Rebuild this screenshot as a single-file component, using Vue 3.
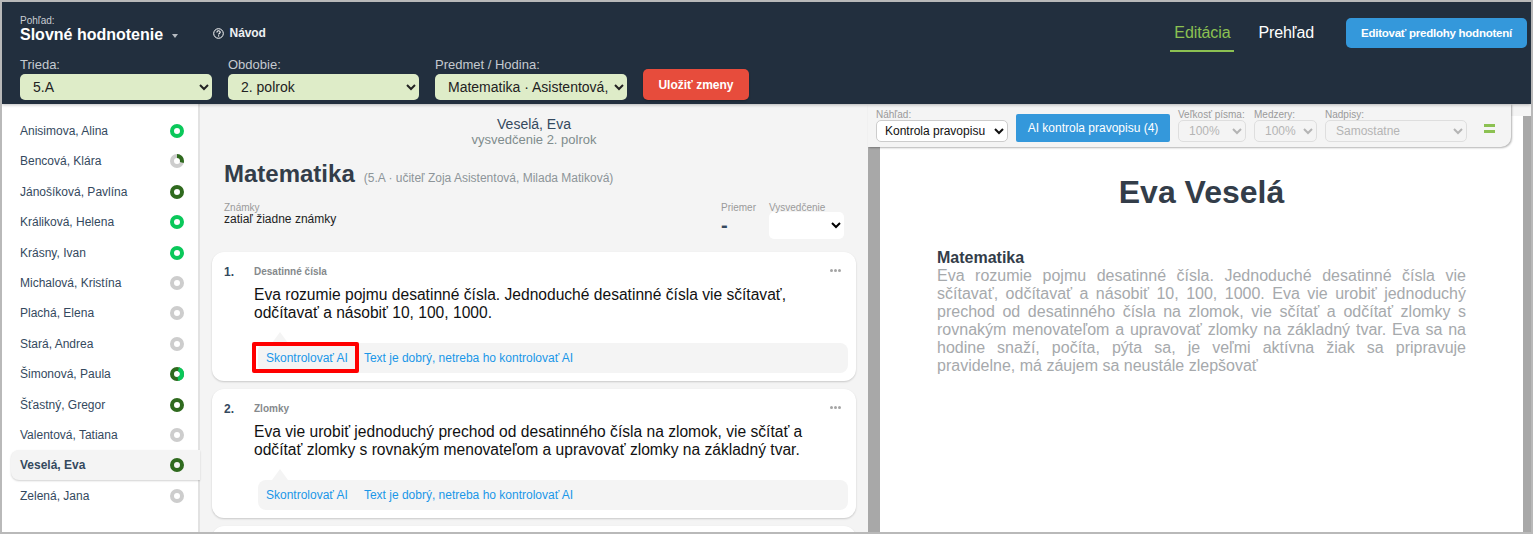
<template>
  <div class="frame">
    <header class="top">
      <div class="top-row">
        <div class="view">
          <div class="view-label">Pohľad:</div>
          <div class="view-title">Slovné hodnotenie <span class="caret"></span></div>
        </div>
        <a class="help">
          <svg width="11" height="11" viewBox="0 0 11 11">
            <circle cx="5.5" cy="5.5" r="4.8" fill="none" stroke="#fff" stroke-width="1" />
            <path d="M3.9 4.4c0-2.1 3.3-2.1 3.3-.1 0 1.2-1.6 1.2-1.6 2.3" fill="none" stroke="#fff" stroke-width="1.1" />
            <rect x="5" y="7.3" width="1.2" height="1.2" fill="#fff" />
          </svg>
          Návod
        </a>
        <nav class="tabs">
          <a class="tab active">Editácia</a>
          <a class="tab">Prehľad</a>
        </nav>
        <button class="btn-templates">Editovať predlohy hodnotení</button>
      </div>
      <div class="filters">
        <label class="filter">
          <span>Trieda:</span>
          <select><option>5.A</option></select>
        </label>
        <label class="filter narrow">
          <span>Obdobie:</span>
          <select><option>2. polrok</option></select>
        </label>
        <label class="filter">
          <span>Predmet / Hodina:</span>
          <select><option>Matematika · Asistentová, Matiková</option></select>
        </label>
        <button class="btn-save">Uložiť zmeny</button>
      </div>
    </header>

    <div class="body">
      <aside class="students">
        <div
          v-for="s in students"
          :key="s.name"
          class="student"
          :class="{ selected: s.name === 'Veselá, Eva' }"
        >
          <span>{{ s.name }}</span>
          <svg class="status" width="14" height="14" viewBox="0 0 14 14">
            <circle cx="7" cy="7" r="5" fill="none" :stroke="s.color" stroke-width="4" />
            <circle
              v-if="s.arc"
              cx="7"
              cy="7"
              r="5"
              fill="none"
              :stroke="s.arcColor"
              stroke-width="4"
              pathLength="100"
              :stroke-dasharray="s.arc + ' 100'"
              :stroke-dashoffset="s.offset"
              transform="rotate(-90 7 7)"
            />
          </svg>
        </div>
      </aside>

      <main class="main">
        <div class="who">
          <div class="who-name">Veselá, Eva</div>
          <div class="who-sub">vysvedčenie 2. polrok</div>
        </div>
        <div class="subject">
          <h1>Matematika</h1>
          <span>(5.A · učiteľ Zoja Asistentová, Milada Matiková)</span>
        </div>
        <div class="grades">
          <div class="grades-list">
            <div class="cap">Známky</div>
            <div class="none">zatiaľ žiadne známky</div>
          </div>
          <div class="avg">
            <div class="cap">Priemer</div>
            <div class="avg-val">-</div>
          </div>
          <div class="final">
            <div class="cap">Vysvedčenie</div>
            <select><option></option></select>
          </div>
        </div>

        <section v-for="(c, i) in cards" :key="c.title" class="card">
          <div class="card-head">
            <b class="num">{{ i + 1 }}.</b>
            <span class="card-title">{{ c.title }}</span>
            <span class="dots"><i></i><i></i><i></i></span>
          </div>
          <p class="card-text">{{ c.text }}</p>
          <div class="card-foot">
            <a class="check" :class="{ marked: i === 0 }">Skontrolovať AI</a>
            <a>Text je dobrý, netreba ho kontrolovať AI</a>
          </div>
        </section>
        <section class="card stub"></section>
      </main>

      <div class="preview">
        <div class="toolbar">
          <label class="tool">
            <span>Náhľad:</span>
            <select class="t-view"><option>Kontrola pravopisu</option></select>
          </label>
          <button class="btn-ai">AI kontrola pravopisu (4)</button>
          <label class="tool">
            <span>Veľkosť písma:</span>
            <select class="t-size" disabled><option>100%</option></select>
          </label>
          <label class="tool">
            <span>Medzery:</span>
            <select class="t-gap" disabled><option>100%</option></select>
          </label>
          <label class="tool">
            <span>Nadpisy:</span>
            <select class="t-head" disabled><option>Samostatne</option></select>
          </label>
          <span class="equals"><i></i><i></i></span>
        </div>
        <div class="sheet-wrap">
          <div class="sheet">
            <h2>Eva Veselá</h2>
            <h3>Matematika</h3>
            <p>
              Eva rozumie pojmu desatinné čísla. Jednoduché desatinné čísla vie sčítavať, odčítavať a
              násobiť 10, 100, 1000. Eva vie urobiť jednoduchý prechod od desatinného čísla na zlomok,
              vie sčítať a odčítať zlomky s rovnakým menovateľom a upravovať zlomky na základný tvar.
              Eva sa na hodine snaží, počíta, pýta sa, je veľmi aktívna žiak sa pripravuje pravidelne,
              má záujem sa neustále zlepšovať
            </p>
          </div>
        </div>
      </div>
    </div>
  </div>
</template>

<script setup>
const GREEN = "#0ac85a";
const DARK = "#2f6a1e";
const GRAY = "#cdcdcd";

const students = [
  { name: "Anisimova, Alina", color: GREEN },
  { name: "Bencová, Klára", color: GRAY, arc: 30, arcColor: DARK, offset: 0 },
  { name: "Jánošíková, Pavlína", color: DARK },
  { name: "Králiková, Helena", color: GREEN },
  { name: "Krásny, Ivan", color: GREEN },
  { name: "Michalová, Kristína", color: GRAY },
  { name: "Plachá, Elena", color: GRAY },
  { name: "Stará, Andrea", color: GRAY },
  { name: "Šimonová, Paula", color: DARK, arc: 42, arcColor: GREEN, offset: -5 },
  { name: "Šťastný, Gregor", color: DARK },
  { name: "Valentová, Tatiana", color: GRAY },
  { name: "Veselá, Eva", color: DARK },
  { name: "Zelená, Jana", color: GRAY },
];

const cards = [
  {
    title: "Desatinné čísla",
    text: "Eva rozumie pojmu desatinné čísla. Jednoduché desatinné čísla vie sčítavať, odčítavať a násobiť 10, 100, 1000.",
  },
  {
    title: "Zlomky",
    text: "Eva vie urobiť jednoduchý prechod od desatinného čísla na zlomok, vie sčítať a odčítať zlomky s rovnakým menovateľom a upravovať zlomky na základný tvar.",
  },
];
</script>

<style>
html,
body {
  margin: 0;
  overflow: hidden;
}
</style>

<style scoped>
.frame {
  box-sizing: border-box;
  width: 1533px;
  height: 534px;
  border: 2px solid #b9b9b9;
  display: flex;
  flex-direction: column;
  overflow: hidden;
  font-family: "Liberation Sans", Arial, sans-serif;
  color: #34495e;
  background: #fff;
}

.top {
  height: 102px;
  flex: none;
  box-sizing: border-box;
  background: #222f3e;
  padding: 14px 4px 0 18px;
  position: relative;
  z-index: 2;
  box-shadow: 0 1px 3px rgba(0, 0, 0, 0.25);
}

.top-row {
  display: flex;
  align-items: flex-start;
  height: 38px;
}

.view-label {
  font-size: 10px;
  line-height: 10px;
  color: #c9cdd2;
}

.view-title {
  font-size: 16px;
  font-weight: bold;
  line-height: 19px;
  margin-top: -1px;
  color: #fff;
}

.caret {
  display: inline-block;
  margin-left: 4px;
  vertical-align: 2px;
  border: 3.5px solid transparent;
  border-top: 4px solid #b5bac0;
  border-bottom: 0;
}

.help {
  margin: 10px 0 0 35px;
  display: flex;
  align-items: center;
  gap: 6px;
  font-size: 12px;
  font-weight: bold;
  color: #eef0f2;
  letter-spacing: -0.1px;
}

.tabs {
  margin-left: auto;
  display: flex;
  gap: 24px;
  margin-right: 32px;
  margin-top: 4px;
}

.tab {
  padding: 2px 4px 6px;
  height: 22px;
  line-height: 22px;
  font-size: 16px;
  color: #fff;
  letter-spacing: -0.1px;
}

.tab.active {
  color: #8cc152;
  border-bottom: 2px solid #8cc152;
}

.tab + .tab {
  padding: 2px 0 6px;
}

.btn-templates {
  width: 181px;
  height: 30px;
  margin: 2px 0 0;
  padding: 0;
  border: 0;
  border-radius: 5px;
  background: #3498db;
  color: #fff;
  font: bold 11.5px "Liberation Sans", Arial, sans-serif;
  letter-spacing: -0.25px;
}

.filters {
  display: flex;
  align-items: flex-end;
  gap: 16px;
  margin-top: 3px;
}

.filter {
  display: flex;
  flex-direction: column;
}

.filter span {
  font-size: 13px;
  line-height: 15px;
  color: #c5cad0;
  margin-bottom: 2px;
}

.filter select {
  width: 192px;
  height: 26px;
  border: 0;
  border-radius: 5px;
  background: #deecc8;
  padding: 0 0 0 9px;
  font: 14px "Liberation Sans", Arial, sans-serif;
  color: #222;
  outline: none;
}

.filter.narrow select {
  width: 191px;
}

.btn-save {
  width: 106px;
  height: 31px;
  border: 0;
  border-radius: 5px;
  background: #e74c3c;
  color: #fff;
  font: bold 12px "Liberation Sans", Arial, sans-serif;
  box-shadow: 0 1px 2px rgba(0, 0, 0, 0.25);
}

.body {
  flex: 1;
  display: flex;
  min-height: 0;
}

.students {
  width: 198px;
  flex: none;
  box-sizing: border-box;
  padding: 11.8px 0 0 9px;
  border-right: 2px solid #e2e2e2;
  background: #fff;
}

.student {
  height: 30.4px;
  margin-right: -2px;
  padding: 0 16px 0 9px;
  box-sizing: border-box;
  display: flex;
  align-items: center;
  justify-content: space-between;
  font-size: 12px;
  color: #34495e;
  position: relative;
}

.student.selected {
  font-weight: bold;
  background: #f4f4f4;
  border-radius: 8px 0 0 8px;
  box-shadow: 0 1px 2px rgba(0, 0, 0, 0.18);
  margin-left: 0;
  padding-left: 9px;
}

.main {
  width: 668px;
  flex: none;
  box-sizing: border-box;
  background: #f4f4f4;
  padding: 0 12px;
  overflow: hidden;
}

.who {
  text-align: center;
  padding-top: 12px;
}

.who-name {
  font-size: 14px;
  line-height: 16px;
  color: #34495e;
}

.who-sub {
  font-size: 13px;
  line-height: 15px;
  color: #7f8c8d;
}

.subject {
  display: flex;
  align-items: baseline;
  gap: 9px;
  margin: 12px 0 0 12px;
}

.subject h1 {
  margin: 0;
  font-size: 24px;
  line-height: 30px;
  font-weight: bold;
  color: #333d49;
}

.subject span {
  font-size: 12px;
  color: #8d9599;
}

.grades {
  display: flex;
  margin: 13px 12px 0;
  height: 50px;
}

.cap {
  font-size: 10px;
  line-height: 11px;
  color: #9a9a9a;
}

.none {
  font-size: 12px;
  line-height: 13px;
  color: #222;
}

.grades-list {
  flex: 1;
}

.avg {
  width: 48px;
}

.avg-val {
  font-size: 20px;
  font-weight: bold;
  line-height: 24px;
  color: #34495e;
}

.final select {
  display: block;
  width: 75px;
  height: 27px;
  margin-top: -1px;
  border: 0;
  border-radius: 5px;
  background: #fff;
  outline: none;
}

.card {
  background: #fff;
  border-radius: 12px;
  box-shadow: 0 1px 2px rgba(0, 0, 0, 0.18);
  margin-bottom: 8px;
  height: 129px;
  box-sizing: border-box;
  padding: 13px 8px 0 12px;
}

.card-head {
  display: flex;
  align-items: center;
  height: 13px;
}

.num {
  width: 30px;
  font-size: 12px;
  color: #34495e;
}

.card-title {
  font-size: 10px;
  font-weight: bold;
  color: #85898c;
}

.dots {
  margin: -3px 7px 0 auto;
  display: flex;
  gap: 1px;
}

.dots i {
  width: 3px;
  height: 3px;
  background: #a5a5a5;
  border-radius: 50%;
}

.card-text {
  margin: 8px 0 0 30px;
  width: 570px;
  font-size: 15.6px;
  line-height: 18px;
  color: #111;
  height: 36px;
}

.card-foot {
  position: relative;
  margin: 21px 0 0 34px;
  height: 30px;
  display: flex;
  align-items: center;
  gap: 16px;
  padding-left: 8px;
  background: #f4f4f4;
  border-radius: 8px;
  font-size: 12px;
  color: #1a97e8;
}

.card-foot::before {
  content: "";
  position: absolute;
  left: 14px;
  top: -11px;
  border: 8px solid transparent;
  border-top: 0;
  border-bottom: 11px solid #f4f4f4;
}

.check {
  position: relative;
}

.check.marked::after {
  content: "";
  position: absolute;
  left: -14px;
  right: -11px;
  top: -9px;
  bottom: -8px;
  border: 4px solid #f00;
  border-radius: 2px;
}

.preview {
  flex: 1;
  min-width: 0;
  position: relative;
  background: #f4f4f4;
  padding-top: 12px;
  box-sizing: border-box;
}

.toolbar {
  position: absolute;
  left: 0;
  top: 0;
  width: 643px;
  height: 43px;
  box-sizing: border-box;
  padding: 5px 0 5px 8px;
  display: flex;
  align-items: flex-end;
  background: #f4f4f4;
  border-radius: 0 0 10px 0;
  box-shadow: 1px 1px 2px rgba(0, 0, 0, 0.3);
  z-index: 1;
}

.tool {
  display: flex;
  flex-direction: column;
  margin: 0 8px 0 0;
}

.tool span {
  font-size: 10px;
  line-height: 11px;
  color: #9a9a9a;
}

.tool select {
  height: 22px;
  box-sizing: border-box;
  border: 1px solid #ccc;
  border-radius: 5px;
  background: #fff;
  font: 12px "Liberation Sans", Arial, sans-serif;
  color: #111;
  padding: 0 0 0 4px;
  outline: none;
}

.tool select:disabled {
  color: #9a9a9a;
  background: #f4f4f4;
  border-color: #d5d5d5;
  padding-left: 6px;
}

.t-view {
  width: 132px;
}

.t-size {
  width: 68px;
}

.t-gap {
  width: 63px;
}

.t-head {
  width: 142px;
}

.btn-ai {
  width: 154px;
  height: 28px;
  margin-right: 8px;
  padding: 0;
  border: 0;
  border-radius: 2px;
  background: #3498db;
  color: #fff;
  font: 12px "Liberation Sans", Arial, sans-serif;
}

.equals {
  margin: 0 0 9px 9px;
  display: flex;
  flex-direction: column;
  gap: 3px;
}

.equals i {
  width: 11px;
  height: 3px;
  background: #8cc152;
}

.sheet-wrap {
  height: 100%;
  background: #a8a8a8;
  padding: 0 8px 0 12px;
  box-sizing: border-box;
}

.sheet {
  background: #fff;
  height: 100%;
  box-sizing: border-box;
  padding: 57px 57px 0;
}

.sheet h2 {
  margin: 0;
  text-align: center;
  font-size: 32px;
  line-height: 38px;
  font-weight: bold;
  color: #333d49;
}

.sheet h3 {
  margin: 38px 0 0;
  font-size: 16px;
  line-height: 18px;
  font-weight: bold;
  color: #333d49;
}

.sheet p {
  margin: 0;
  font-size: 16px;
  line-height: 18px;
  text-align: justify;
  color: #a6a9ac;
}
</style>
